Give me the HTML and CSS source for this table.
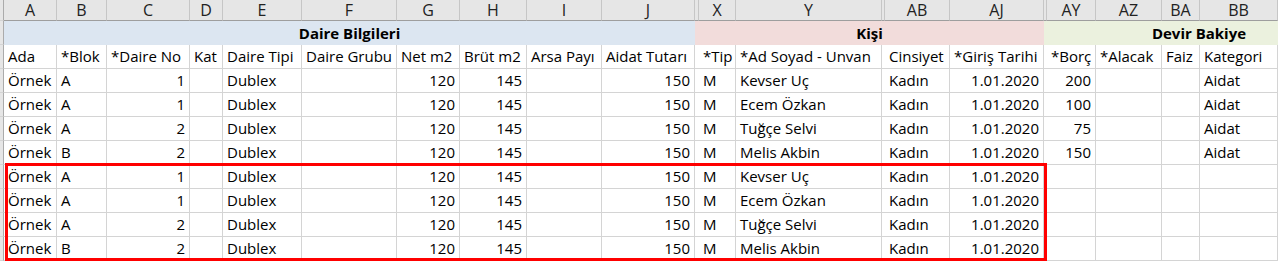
FILE: index.html
```html
<!DOCTYPE html>
<html lang="tr">
<head>
<meta charset="utf-8">
<title>Daire Listesi</title>
<link rel="stylesheet" href="styles.css">
</head>
<body>
<div class="wrap">
<div class="sheet">
  <!-- column letters -->
  <div class="h rh"></div>
  <div class="h">A</div><div class="h">B</div><div class="h">C</div><div class="h">D</div><div class="h">E</div><div class="h">F</div><div class="h">G</div><div class="h">H</div><div class="h">I</div><div class="h">J</div><div class="h hs"></div><div class="h">X</div><div class="h">Y</div><div class="h hs"></div><div class="h">AB</div><div class="h">AJ</div><div class="h hs"></div><div class="h">AY</div><div class="h">AZ</div><div class="h">BA</div><div class="h">BB</div>

  <!-- group row -->
  <div class="rh"></div>
  <div class="grp blue">Daire Bilgileri</div>
  <div class="grp pink">Kişi</div>
  <div class="grp green">Devir Bakiye</div>

  <!-- header row -->
  <div class="rh"></div>
  <div class="c">Ada</div><div class="c">*Blok</div><div class="c">*Daire No</div><div class="c">Kat</div><div class="c">Daire Tipi</div><div class="c">Daire Grubu</div><div class="c">Net m2</div><div class="c">Brüt m2</div><div class="c">Arsa Payı</div><div class="c">Aidat Tutarı</div><div class="s"></div><div class="c">*Tip</div><div class="c">*Ad Soyad - Unvan</div><div class="s"></div><div class="c">Cinsiyet</div><div class="c">*Giriş Tarihi</div><div class="s"></div><div class="c">*Borç</div><div class="c">*Alacak</div><div class="c">Faiz</div><div class="c">Kategori</div>

  <!-- row 1 -->
  <div class="rh"></div>
  <div class="c">Örnek</div><div class="c">A</div><div class="c r">1</div><div class="c"></div><div class="c">Dublex</div><div class="c"></div><div class="c r">120</div><div class="c r">145</div><div class="c"></div><div class="c r">150</div><div class="s"></div><div class="c">M</div><div class="c">Kevser Uç</div><div class="s"></div><div class="c">Kadın</div><div class="c r">1.01.2020</div><div class="s"></div><div class="c r">200</div><div class="c"></div><div class="c"></div><div class="c">Aidat</div>

  <!-- row 2 -->
  <div class="rh"></div>
  <div class="c">Örnek</div><div class="c">A</div><div class="c r">1</div><div class="c"></div><div class="c">Dublex</div><div class="c"></div><div class="c r">120</div><div class="c r">145</div><div class="c"></div><div class="c r">150</div><div class="s"></div><div class="c">M</div><div class="c">Ecem Özkan</div><div class="s"></div><div class="c">Kadın</div><div class="c r">1.01.2020</div><div class="s"></div><div class="c r">100</div><div class="c"></div><div class="c"></div><div class="c">Aidat</div>

  <!-- row 3 -->
  <div class="rh"></div>
  <div class="c">Örnek</div><div class="c">A</div><div class="c r">2</div><div class="c"></div><div class="c">Dublex</div><div class="c"></div><div class="c r">120</div><div class="c r">145</div><div class="c"></div><div class="c r">150</div><div class="s"></div><div class="c">M</div><div class="c">Tuğçe Selvi</div><div class="s"></div><div class="c">Kadın</div><div class="c r">1.01.2020</div><div class="s"></div><div class="c r">75</div><div class="c"></div><div class="c"></div><div class="c">Aidat</div>

  <!-- row 4 -->
  <div class="rh"></div>
  <div class="c">Örnek</div><div class="c">B</div><div class="c r">2</div><div class="c"></div><div class="c">Dublex</div><div class="c"></div><div class="c r">120</div><div class="c r">145</div><div class="c"></div><div class="c r">150</div><div class="s"></div><div class="c">M</div><div class="c">Melis Akbin</div><div class="s"></div><div class="c">Kadın</div><div class="c r">1.01.2020</div><div class="s"></div><div class="c r">150</div><div class="c"></div><div class="c"></div><div class="c">Aidat</div>

  <!-- row 5 -->
  <div class="rh"></div>
  <div class="c">Örnek</div><div class="c">A</div><div class="c r">1</div><div class="c"></div><div class="c">Dublex</div><div class="c"></div><div class="c r">120</div><div class="c r">145</div><div class="c"></div><div class="c r">150</div><div class="s"></div><div class="c">M</div><div class="c">Kevser Uç</div><div class="s"></div><div class="c">Kadın</div><div class="c r">1.01.2020</div><div class="s"></div><div class="c"></div><div class="c"></div><div class="c"></div><div class="c"></div>

  <!-- row 6 -->
  <div class="rh"></div>
  <div class="c">Örnek</div><div class="c">A</div><div class="c r">1</div><div class="c"></div><div class="c">Dublex</div><div class="c"></div><div class="c r">120</div><div class="c r">145</div><div class="c"></div><div class="c r">150</div><div class="s"></div><div class="c">M</div><div class="c">Ecem Özkan</div><div class="s"></div><div class="c">Kadın</div><div class="c r">1.01.2020</div><div class="s"></div><div class="c"></div><div class="c"></div><div class="c"></div><div class="c"></div>

  <!-- row 7 -->
  <div class="rh"></div>
  <div class="c">Örnek</div><div class="c">A</div><div class="c r">2</div><div class="c"></div><div class="c">Dublex</div><div class="c"></div><div class="c r">120</div><div class="c r">145</div><div class="c"></div><div class="c r">150</div><div class="s"></div><div class="c">M</div><div class="c">Tuğçe Selvi</div><div class="s"></div><div class="c">Kadın</div><div class="c r">1.01.2020</div><div class="s"></div><div class="c"></div><div class="c"></div><div class="c"></div><div class="c"></div>

  <!-- row 8 -->
  <div class="rh"></div>
  <div class="c">Örnek</div><div class="c">B</div><div class="c r">2</div><div class="c"></div><div class="c">Dublex</div><div class="c"></div><div class="c r">120</div><div class="c r">145</div><div class="c"></div><div class="c r">150</div><div class="s"></div><div class="c">M</div><div class="c">Melis Akbin</div><div class="s"></div><div class="c">Kadın</div><div class="c r">1.01.2020</div><div class="s"></div><div class="c"></div><div class="c"></div><div class="c"></div><div class="c"></div>
</div>
<div class="sel"></div>
</div>
</body>
</html>
```

FILE: styles.css
```css
* { box-sizing: border-box; }
html, body { margin: 0; padding: 0; background: #fff; }
body { width: 1278px; height: 262px; overflow: hidden; }

.wrap { position: relative; }

.sheet {
  display: grid;
  grid-template-columns: 4px 53px 50px 83px 33px 79px 95px 63px 67px 75px 93px 4px 37px 146px 3px 65px 94px 3px 49px 66px 38px 78px;
  grid-template-rows: 21px 24px 24px repeat(8, 24px);
  font-family: "Open Sans", Lato, sans-serif;
  font-size: 15px;
  color: #000;
}

.h {
  background: #e6e6e6;
  border-right: 1px solid #c6c6c6;
  border-bottom: 1px solid #9e9e9e;
  color: #222;
  text-align: center;
  font-size: 16px;
  line-height: 20px;
}
.hs { background: #e6e6e6; }

.rh {
  background: #e6e6e6;
  border-right: 1px solid #ababab;
  border-bottom: 1px solid #d4d4d4;
}

.grp {
  font-weight: bold;
  text-align: center;
  line-height: 24px;
  white-space: nowrap;
  font-size: 15px;
}
.blue { grid-column: 2 / 12; background: #dce6f1; }
.pink { grid-column: 12 / 18; background: #f2dcdb; }
.green { grid-column: 18 / 23; background: #ebf1de; padding-left: 76px; }

.c {
  border-right: 1px solid #d4d4d4;
  border-bottom: 1px solid #d4d4d4;
  padding: 0 4px;
  line-height: 23px;
  white-space: nowrap;
  overflow: hidden;
}
.r { text-align: right; }
.s { border-bottom: 1px solid #d4d4d4; }

.sel {
  position: absolute;
  left: 5px;
  top: 163px;
  width: 1042px;
  height: 98px;
  border: 3px solid #ff0000;
  pointer-events: none;
}
```
